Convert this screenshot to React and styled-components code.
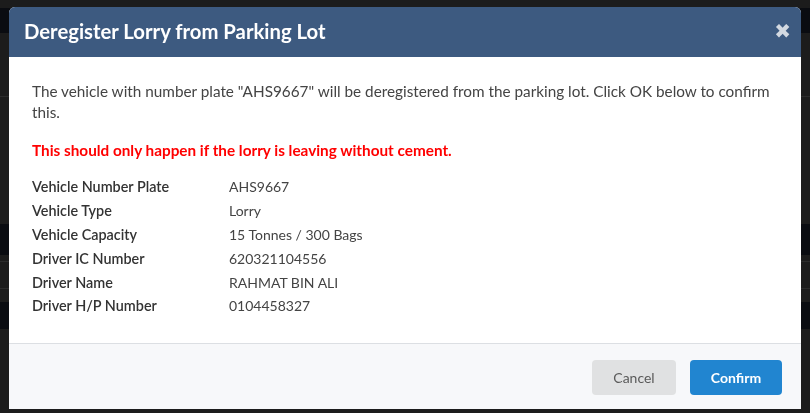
import React from "react";
import styled, { createGlobalStyle } from "styled-components";

const GlobalStyle = createGlobalStyle`
  html, body {
    margin: 0;
    padding: 0;
    background: #222222;
    font-family: "Lato", "Liberation Sans", sans-serif;
  }
  * {
    box-sizing: border-box;
  }
`;

const Page = styled.div`
  width: 810px;
  height: 413px;
  background: #222222;
  display: flex;
  flex-direction: column;
  padding-top: 8px;
`;

const PageBand = styled.div`
  height: ${(p) => p.h}px;
  background: ${(p) => (p.dark ? "#0c0f15" : "transparent")};
  border-bottom: ${(p) => (p.line ? "1px solid #343434" : "none")};
`;

const Overlay = styled.div`
  position: fixed;
  inset: 0;
  background: rgba(0, 0, 0, 0.15);
  display: flex;
  align-items: flex-start;
  justify-content: flex-start;
  padding: 7px 0 0 9px;
`;

const Modal = styled.div`
  width: 792px;
  height: 402px;
  background: #ffffff;
  border-radius: 6px 6px 0 0;
  overflow: hidden;
  display: flex;
  flex-direction: column;
`;

const Header = styled.div`
  height: 50px;
  background: #3d5a80;
  display: flex;
  align-items: center;
  justify-content: space-between;
  padding: 0 10px 0 15px;
`;

const Title = styled.h3`
  margin: 0;
  font-size: 20.3px;
  font-weight: 700;
  color: #ffffff;
  line-height: 1;
  padding-bottom: 1px;
`;

const Close = styled.span`
  color: #d3d9e1;
  font-size: 20px;
  font-weight: 900;
  line-height: 1;
  font-family: "DejaVu Sans", sans-serif;
  margin-top: -2px;
`;

const Body = styled.div`
  flex: 1;
  padding: 24px 30px 24px 23px;
  color: #444444;
  font-size: 15.3px;
`;

const Paragraph = styled.p`
  margin: 0;
  line-height: 21px;
`;

const Warning = styled(Paragraph)`
  margin-top: 17px;
  color: #ff0000;
  font-weight: 700;
`;

const Details = styled.div`
  margin-top: 14px;
  display: grid;
  grid-template-columns: 197px 1fr;
  grid-auto-rows: 23.8px;
  align-items: center;
  font-size: 14px;
`;

const Label = styled.div`
  font-weight: 600;
  font-size: 14.4px;
  color: #333333;
`;

const Value = styled.div`
  color: #444444;
`;

const Footer = styled.div`
  height: 66px;
  background: #f7f8fa;
  border-top: 1px solid #dcdfe3;
  display: flex;
  align-items: center;
  justify-content: flex-end;
  gap: 14px;
  padding: 0 19px 0 0;
`;

const Button = styled.button`
  height: 35px;
  width: ${(p) => p.w}px;
  border: none;
  border-radius: 4px;
  font-family: "Lato", "Liberation Sans", sans-serif;
  font-size: 14px;
  font-weight: ${(p) => (p.primary ? 700 : 400)};
  background: ${(p) => (p.primary ? "#2185d0" : "#e0e1e2")};
  color: ${(p) => (p.primary ? "#ffffff" : "#5a5a5a")};
  margin-top: 1px;
`;

const details = [
  ["Vehicle Number Plate", "AHS9667"],
  ["Vehicle Type", "Lorry"],
  ["Vehicle Capacity", "15 Tonnes / 300 Bags"],
  ["Driver IC Number", "620321104556"],
  ["Driver Name", "RAHMAT BIN ALI"],
  ["Driver H/P Number", "0104458327"],
];

export default function App() {
  return (
    <>
      <GlobalStyle />
      <Page>
        <PageBand h={25} dark />
        <PageBand h={64} line />
        <PageBand h={127} />
        <PageBand h={31} dark />
        <PageBand h={7} line />
        <PageBand h={27} line />
        <PageBand h={13} />
        <PageBand h={27} dark />
      </Page>
      <Overlay>
        <Modal>
          <Header>
            <Title>Deregister Lorry from Parking Lot</Title>
            <Close>✖</Close>
          </Header>
          <Body>
            <Paragraph>
              The vehicle with number plate "AHS9667" will be deregistered from
              the parking lot. Click OK below to confirm this.
            </Paragraph>
            <Warning>
              This should only happen if the lorry is leaving without cement.
            </Warning>
            <Details>
              {details.map(([label, value]) => (
                <React.Fragment key={label}>
                  <Label>{label}</Label>
                  <Value>{value}</Value>
                </React.Fragment>
              ))}
            </Details>
          </Body>
          <Footer>
            <Button w={84}>Cancel</Button>
            <Button w={92} primary>
              Confirm
            </Button>
          </Footer>
        </Modal>
      </Overlay>
    </>
  );
}
